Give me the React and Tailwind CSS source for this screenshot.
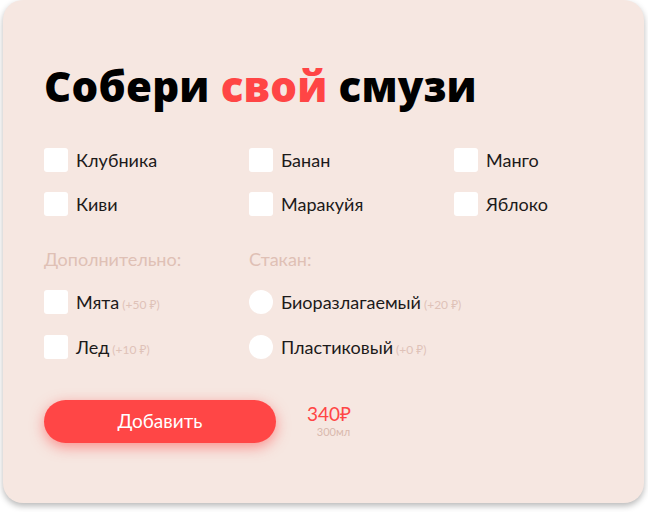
import React from "react";

const fruits = [
  ["Клубника", "Банан", "Манго"],
  ["Киви", "Маракуйя", "Яблоко"],
];

function Box({ round }) {
  return (
    <span
      className={
        "block w-6 h-6 bg-white shrink-0 " + (round ? "rounded-full" : "rounded-[3px]")
      }
    />
  );
}

function Item({ label, extra, round }) {
  return (
    <div className="flex items-center gap-2 h-6">
      <Box round={round} />
      <span className="text-[18px] text-[#1c1a1a] leading-none whitespace-nowrap">
        {label}
        {extra && (
          <span className="text-[12px] text-[#dfc2b8] ml-[3px]">{extra}</span>
        )}
      </span>
    </div>
  );
}

export default function App() {
  return (
    <div
      className="w-[648px] h-[512px] bg-white"
      style={{ fontFamily: "Lato, 'Noto Sans', sans-serif" }}
    >
      <div className="ml-[3px] w-[641px] h-[503px] rounded-[20px] bg-[#f6e7e1] shadow-[0_3px_6px_rgba(0,0,0,0.28)] px-[41px] pt-[62px]">
        <h1
          className="text-[42px] leading-[48px] font-extrabold text-black tracking-[0.2px]"
          style={{ fontFamily: "'Open Sans', 'Noto Sans', sans-serif" }}
        >
          Собери <span className="text-[#ff4545]">свой</span> смузи
        </h1>
        <div className="mt-[38px] flex flex-col gap-5">
          {fruits.map((row, i) => (
            <div key={i} className="grid grid-cols-[205px_205px_1fr]">
              {row.map((f) => (
                <Item key={f} label={f} />
              ))}
            </div>
          ))}
        </div>
        <div className="mt-[31px] grid grid-cols-[205px_1fr]">
          <div>
            <div className="text-[18px] text-[#dfc0b5] leading-6">Дополнительно:</div>
            <div className="mt-[19px] flex flex-col gap-[21px]">
              <Item label="Мята" extra="(+50 ₽)" />
              <Item label="Лед" extra="(+10 ₽)" />
            </div>
          </div>
          <div>
            <div className="text-[18px] text-[#dfc0b5] leading-6">Стакан:</div>
            <div className="mt-[19px] flex flex-col gap-[21px]">
              <Item round label="Биоразлагаемый" extra="(+20 ₽)" />
              <Item round label="Пластиковый" extra="(+0 ₽)" />
            </div>
          </div>
        </div>
        <div className="mt-[41px] flex items-start">
          <button className="w-[232px] h-[43px] rounded-full bg-[#ff4646] text-white text-[19px] shadow-[0_4px_14px_rgba(255,70,70,0.55)]">
            Добавить
          </button>
          <div className="ml-[31px] mt-[4px] flex flex-col items-end">
            <span className="text-[19px] leading-[20px] text-[#ff4545]">340₽</span>
            <span className="text-[11px] leading-[16px] text-[#d9b9ae] mr-[1px]">300мл</span>
          </div>
        </div>
      </div>
    </div>
  );
}
